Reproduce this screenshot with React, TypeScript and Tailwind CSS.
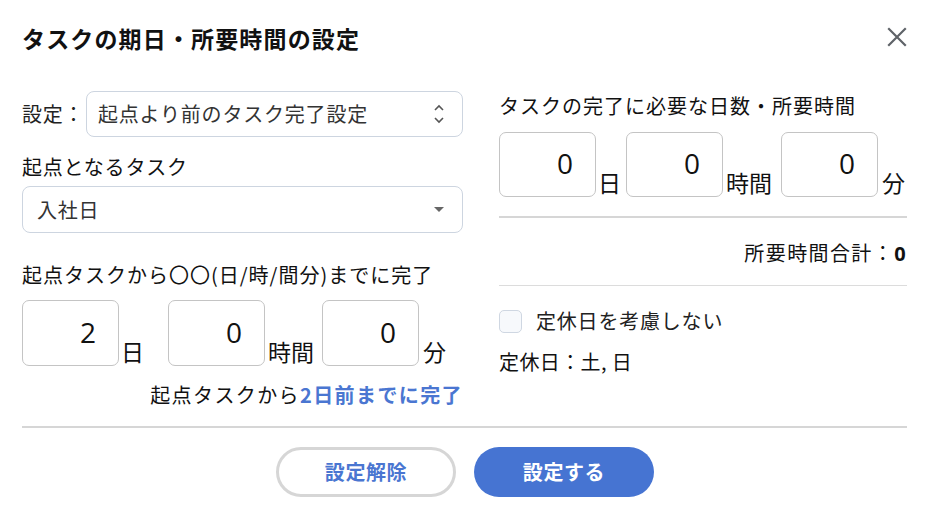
import React from "react";

const JP = { fontFamily: '"Noto Sans CJK JP", "Noto Sans", sans-serif' };
const NUM = { fontFamily: '"Open Sans", "Noto Sans CJK JP", sans-serif' };

function NumBox({ value, h = 66 }: { value: string; h?: number }) {
  return (
    <div
      className="w-[97px] flex items-center justify-end pr-[22px] border border-[#c4c4c4] rounded-[7px] text-[28px] text-[#111]"
      style={{ ...NUM, height: h }}
    >
      <span className="-mt-[3px]">{value}</span>
    </div>
  );
}

function Unit({ children }: { children: React.ReactNode }) {
  return <span className="text-[23px] leading-[30px] text-[#111]">{children}</span>;
}

export default function App() {
  return (
    <div className="w-[929px] h-[522px] bg-white px-[22px] text-[#222]" style={JP}>
      <div className="pt-[21px] h-[55px] flex items-start justify-between">
        <h1 className="text-[23px] leading-[34px] font-bold tracking-[0.05em] text-[#111]">
          タスクの期日・所要時間の設定
        </h1>
        <svg width="22" height="22" viewBox="0 0 22 22" className="mt-[5px] mr-[-1px]">
          <path d="M3 3 L19 19 M19 3 L3 19" stroke="#5f6368" strokeWidth="2.2" strokeLinecap="square" />
        </svg>
      </div>

      <div className="mt-[36px] flex items-start gap-[36px]">
        {/* Left column */}
        <div className="w-[441px] flex flex-col">
          <div className="h-[46px] flex items-center">
            <span className="w-[64px] text-[20px] tracking-[0.04em] text-[#222]">設定：</span>
            <div className="flex-1 h-[46px] border border-[#cdd5e0] rounded-[8px] flex items-center justify-between pl-[11px] pr-[17px]">
              <span className="text-[20px] tracking-[0.04em] text-[#333]">起点より前のタスク完了設定</span>
              <svg width="12" height="22" viewBox="0 0 12 22">
                <path d="M2 7 L6 3 L10 7" stroke="#555" strokeWidth="1.6" fill="none" />
                <path d="M2 15 L6 19 L10 15" stroke="#555" strokeWidth="1.6" fill="none" />
              </svg>
            </div>
          </div>
          <div className="mt-[15px] h-[30px] leading-[30px] text-[20px] tracking-[0.04em] text-[#111]">
            起点となるタスク
          </div>
          <div className="mt-[4px] h-[47px] border border-[#cdd5e0] rounded-[8px] flex items-center justify-between pl-[14px] pr-[17px]">
            <span className="text-[20px] tracking-[0.04em] text-[#333]">入社日</span>
            <svg width="12" height="6" viewBox="0 0 12 6">
              <path d="M1 0 L11 0 L6 5 Z" fill="#666" />
            </svg>
          </div>
          <div className="mt-[27px] h-[30px] leading-[30px] text-[20px] tracking-[0.05em] text-[#111]">
            起点タスクから〇〇(日/時/間分)までに完了
          </div>
          <div className="mt-[10px] h-[66px] flex items-end">
            <NumBox value="2" />
            <span className="ml-[2px] w-[47px]"><Unit>日</Unit></span>
            <NumBox value="0" />
            <span className="ml-[3px] w-[54px]"><Unit>時間</Unit></span>
            <NumBox value="0" />
            <span className="ml-[4px]"><Unit>分</Unit></span>
          </div>
          <div className="mt-[14px] h-[30px] leading-[30px] text-right text-[20px] tracking-[0.07em] text-[#111]">
            起点タスクから<span className="font-bold text-[#4a76d1]">2日前までに完了</span>
          </div>
        </div>

        {/* Right column */}
        <div className="flex-1 flex flex-col">
          <div className="h-[30px] leading-[30px] text-[20px] tracking-[0.05em] text-[#111]">
            タスクの完了に必要な日数・所要時間
          </div>
          <div className="mt-[11px] h-[65px] flex items-end">
            <NumBox value="0" h={65} />
            <span className="ml-[2px] w-[28px]"><Unit>日</Unit></span>
            <NumBox value="0" h={65} />
            <span className="ml-[3px] w-[55px]"><Unit>時間</Unit></span>
            <NumBox value="0" h={65} />
            <span className="ml-[4px]"><Unit>分</Unit></span>
          </div>
          <div className="mt-[19px] h-[2px] bg-[#d6d6d6]" />
          <div className="mt-[20px] h-[30px] leading-[30px] text-right text-[20px] tracking-[0.07em] text-[#111]">
            所要時間合計：<span className="font-bold" style={NUM}>0</span>
          </div>
          <div className="mt-[17px] h-px bg-[#dcdcdc]" />
          <div className="mt-[20px] h-[30px] flex items-center">
            <div className="w-[23px] h-[23px] border border-[#cfd7e2] bg-[#f7f9fc] rounded-[5px]" />
            <span className="ml-[14px] text-[20px] tracking-[0.04em] text-[#222]">定休日を考慮しない</span>
          </div>
          <div className="mt-[11px] h-[30px] leading-[30px] text-[20px] tracking-[0.02em] text-[#111]">
            定休日：土, 日
          </div>
        </div>
      </div>

      <div className="mt-[16px] h-[2px] bg-[#d6d6d6]" />

      <div className="mt-[19px] flex justify-center gap-[18px] pl-[1px]">
        <button className="w-[180px] h-[50px] rounded-full border-[3px] border-[#d6d6d6] bg-white text-[20px] tracking-[0.03em] font-bold text-[#4a76d1]">
          設定解除
        </button>
        <button className="w-[180px] h-[50px] rounded-full bg-[#4674d2] text-[20px] tracking-[0.03em] font-bold text-white">
          設定する
        </button>
      </div>
    </div>
  );
}
